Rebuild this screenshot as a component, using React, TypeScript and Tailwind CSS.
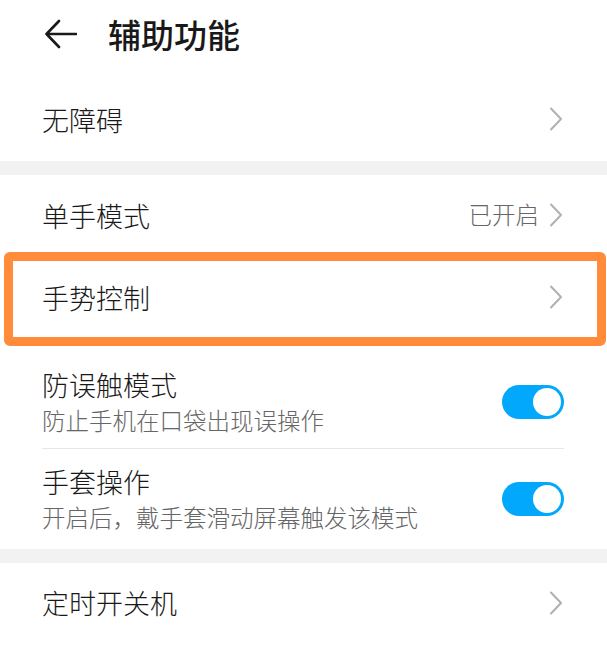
import React from "react";

const font = { fontFamily: '"Noto Sans CJK SC", "Noto Sans", sans-serif' };

function Chevron() {
  return (
    <svg width="14" height="24" viewBox="0 0 14 24" fill="none" className="shrink-0">
      <path d="M2 1.5 L12 12 L2 22.5" stroke="#b0b0b0" strokeWidth="2" strokeLinecap="round" strokeLinejoin="round" />
    </svg>
  );
}

function Toggle() {
  return (
    <div className="w-[62px] h-[34px] rounded-full bg-[#02a8fb] p-[3px] flex justify-end shrink-0">
      <div className="w-[28px] h-[28px] rounded-full bg-white" />
    </div>
  );
}

function Band() {
  return <div className="h-[14px] bg-[#f2f2f2]" />;
}

export default function App() {
  return (
    <div className="w-[607px] h-[650px] bg-white overflow-hidden text-[#191919] font-light" style={font}>
      <header className="h-[72px] pb-[4px] pl-[45px] flex items-center">
        <svg width="32" height="30" viewBox="0 0 32 30" fill="none">
          <path d="M14 2 L1.5 15 L14 28 M1.5 15 L31 15" stroke="#1a1a1a" strokeWidth="2.6" strokeLinecap="round" strokeLinejoin="round" />
        </svg>
        <h1 className="ml-[31px] text-[33px] font-medium leading-none">辅助功能</h1>
      </header>

      <div className="h-[89px] pt-[5px] pl-[42px] pr-[44px] flex items-center justify-between">
        <span className="text-[27px] leading-none">无障碍</span>
        <Chevron />
      </div>

      <Band />

      <div className="h-[83px] pb-[3px] pl-[42px] pr-[44px] flex items-center justify-between">
        <span className="text-[27px] leading-none">单手模式</span>
        <div className="flex items-center gap-[10px]">
          <span className="text-[23.5px] leading-none text-[#666]">已开启</span>
          <Chevron />
        </div>
      </div>

      <div className="relative h-[94px] pb-[16px] pl-[42px] pr-[44px] flex items-center justify-between">
        <span className="text-[27px] leading-none">手势控制</span>
        <Chevron />
        <div className="absolute left-[4px] right-[1px] top-[-6px] h-[94px] border-[9px] border-[#ff8b3b] rounded-[6px]" />
      </div>

      <div className="pl-[42px] pr-[43px]">
        <div className="h-[97px] pt-[3px] flex items-center justify-between border-b border-[#e6e6e6]">
          <div>
            <div className="text-[27px] leading-[36px]">防误触模式</div>
            <div className="text-[23.5px] leading-[34px] text-[#666]">防止手机在口袋出现误操作</div>
          </div>
          <Toggle />
        </div>
        <div className="h-[100px] flex items-center justify-between">
          <div>
            <div className="text-[27px] leading-[36px]">手套操作</div>
            <div className="text-[23.5px] leading-[34px] text-[#666]">开启后，戴手套滑动屏幕触发该模式</div>
          </div>
          <Toggle />
        </div>
      </div>

      <Band />

      <div className="h-[87px] pb-[8px] pl-[42px] pr-[44px] flex items-center justify-between">
        <span className="text-[27px] leading-none">定时开关机</span>
        <Chevron />
      </div>
    </div>
  );
}
